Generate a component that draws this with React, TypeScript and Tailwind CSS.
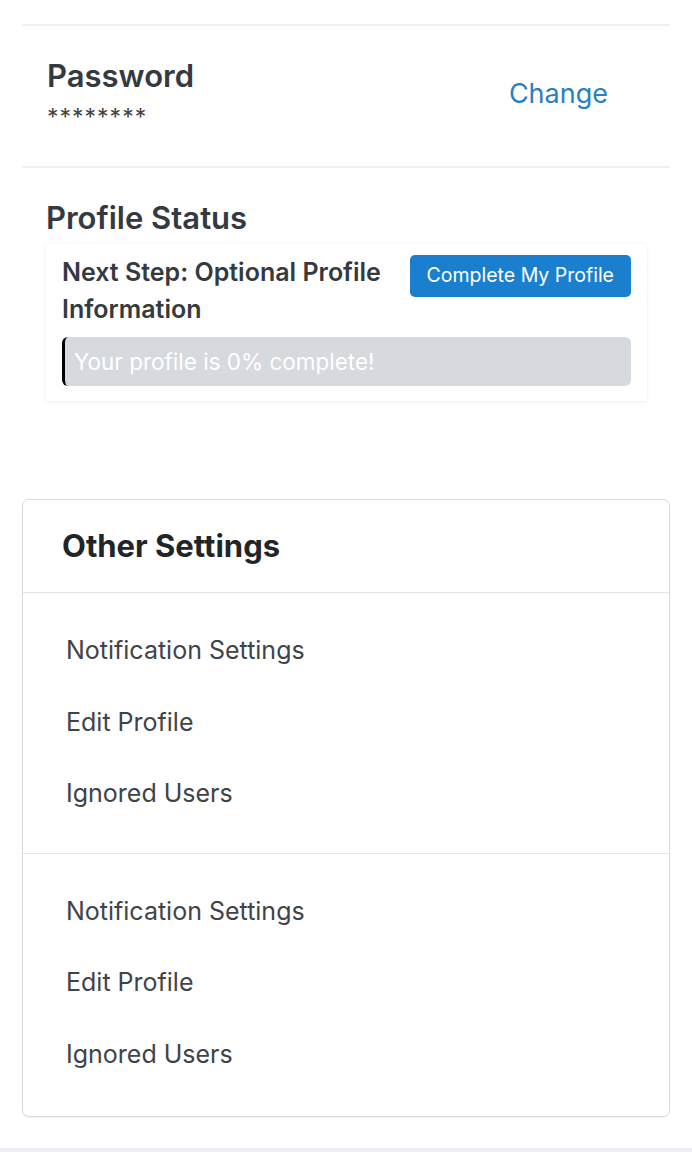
import React from "react";

const font = { fontFamily: "Inter, 'Noto Sans', sans-serif" };

function SettingsGroup({ items, last }: { items: string[]; last?: boolean }) {
  return (
    <ul className={last ? "pt-[22px] pb-[26px]" : "pt-[22px] pb-[23px] border-b border-[#e5e5e5]"}>
      {items.map((item) => (
        <li key={item} className="pl-[43px] h-[71.5px] flex items-center text-[25px] text-[#3f4448]">
          {item}
        </li>
      ))}
    </ul>
  );
}

export default function App() {
  const items = ["Notification Settings", "Edit Profile", "Ignored Users"];
  return (
    <div className="w-[692px] h-[1152px] bg-white flex flex-col" style={font}>
      <div className="px-[22px] pt-[24px] flex-1">
        {/* Password */}
        <div className="border-t-2 border-b-2 border-[#f0f0f0] h-[144px] flex items-center justify-between pl-[25px] pr-[62px]">
          <div className="-mt-[5px]">
            <h3 className="text-[31px] font-semibold text-[#343a40] leading-[38px]">Password</h3>
            <div className="mt-[8px] text-[23px] text-[#444] leading-[28px] tracking-[1px]">********</div>
          </div>
          <button className="text-[27px] text-[#2a7fc0] -mt-[4px]">Change</button>
        </div>

        {/* Profile status */}
        <div className="pl-[24px] pr-[23px] pt-[32px]">
          <h3 className="text-[31px] font-semibold text-[#343a40] leading-[36px]">Profile Status</h3>
          <div className="mt-[8px] bg-white shadow-[0_1px_4px_rgba(0,0,0,0.08)] px-[16px] pt-[10px] pb-[15px]">
            <div className="flex justify-between items-start">
              <p className="text-[25px] font-semibold text-[#343a40] leading-[37px] w-[340px]">
                Next Step: Optional Profile Information
              </p>
              <button className="bg-[#1b7fcf] text-white text-[19.5px] rounded-[5px] h-[42px] px-[17px] mt-[1px]">
                Complete My Profile
              </button>
            </div>
            <div className="mt-[9px] h-[49px] rounded-[6px] bg-[#d6d9dd] border-l-[3px] border-black flex items-center pl-[9px] text-[22.5px] text-white">
              Your profile is 0% complete!
            </div>
          </div>
        </div>

        {/* Other settings */}
        <div className="mt-[98px] border-[1.5px] border-[#dadada] rounded-[7px] shadow-[0_1px_2px_rgba(0,0,0,0.06)]">
          <div className="h-[93px] border-b border-[#e5e5e5] flex items-center pl-[39px]">
            <h2 className="text-[31px] font-bold text-[#212529]">Other Settings</h2>
          </div>
          <SettingsGroup items={items} />
          <SettingsGroup items={items} last />
        </div>
      </div>
      <div className="h-[4px] bg-[#eceef3]" />
    </div>
  );
}
